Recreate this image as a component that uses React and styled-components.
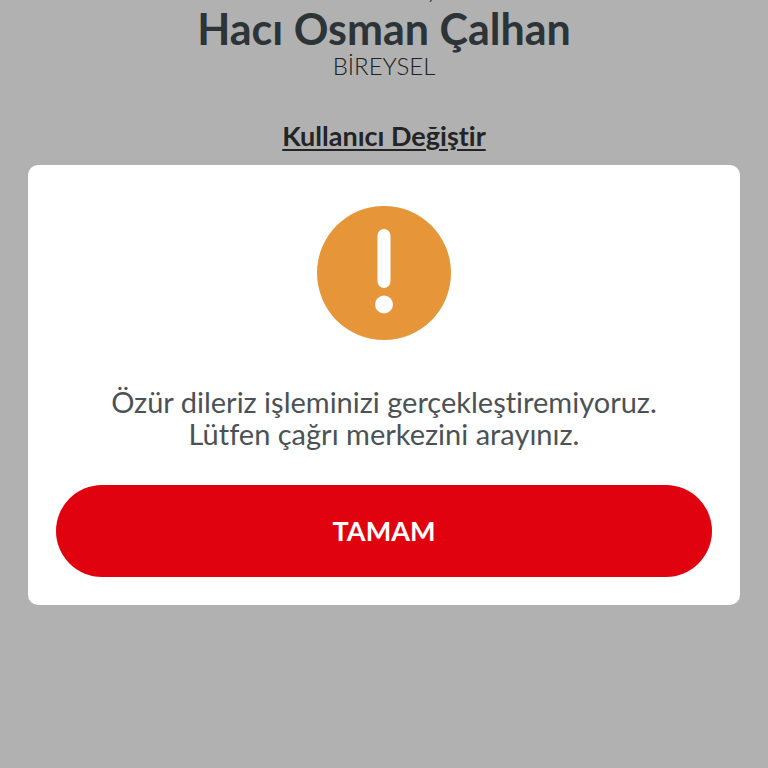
import React from "react"
import styled, { createGlobalStyle } from "styled-components"

const color = {
  name: "#424c50",
  muted: "#2c2f31",
  link: "#323537",
  message: "#4b5256",
  red: "#e10210",
  orange: "#e69638",
}

const GlobalStyle = createGlobalStyle`
  * {
    box-sizing: border-box;
  }

  body {
    margin: 0;
    background-color: #fff;
    font-family: Lato, "Open Sans", sans-serif;
    font-variant-ligatures: none;
  }
`

const Page = styled.main`
  min-height: 100vh;
  display: flex;
  flex-direction: column;
  align-items: center;
`

const Greeting = styled.div`
  height: 5px;
  display: flex;
  align-items: flex-end;
  overflow: hidden;

  color: ${color.name};
  font-size: 24px;
  line-height: 30px;
`

const UserName = styled.h1`
  margin: 0;
  color: ${color.name};
  font-size: 43px;
  font-weight: 700;
  line-height: 48px;
`

const UserType = styled.div`
  color: ${color.muted};
  font-size: 24px;
  font-weight: 300;
  line-height: 26px;
`

const ChangeUser = styled.a`
  margin-top: 41px;
  color: ${color.link};
  font-size: 27px;
  font-weight: 700;
  line-height: 32px;
  text-underline-offset: 3px;
  text-decoration-thickness: 2px;
`

const Backdrop = styled.div`
  position: fixed;
  inset: 0;
  padding: 30px 28px 28px;
  background-color: rgba(0, 0, 0, 0.305);

  display: flex;
  align-items: center;
`

const Dialog = styled.section`
  flex-grow: 1;
  padding: 41px 28px 28px;
  border-radius: 10px;
  background-color: #fff;

  display: flex;
  flex-direction: column;
  align-items: center;
`

const Message = styled.p`
  margin: 46px 0 35px;
  color: ${color.message};
  font-size: 29px;
  line-height: 32px;
  text-align: center;
`

const Button = styled.button`
  align-self: stretch;
  padding: 30px;
  border: 0;
  border-radius: 46px;
  background-color: ${color.red};
  color: #fff;
  font-family: inherit;
  font-size: 27px;
  font-weight: 700;
  line-height: 32px;
  cursor: pointer;
`

const WarningIcon = () => (
  <svg width="134" height="134" viewBox="0 0 134 134" aria-hidden="true">
    <circle cx="67" cy="67" r="67" fill={color.orange} />
    <rect x="60.5" y="23" width="13" height="59" rx="6.5" fill="#fff" />
    <circle cx="67" cy="98.5" r="9" fill="#fff" />
  </svg>
)

class App extends React.Component {
  state = { isWarningOpen: true }

  closeWarning = () => {
    this.setState({ isWarningOpen: false })
  }

  render() {
    return (
      <>
        <GlobalStyle />
        <Page lang="tr">
          <Greeting>Merhaba,</Greeting>
          <UserName>Hacı Osman Çalhan</UserName>
          <UserType>BİREYSEL</UserType>
          <ChangeUser href="#kullanici">Kullanıcı Değiştir</ChangeUser>
        </Page>
        {this.state.isWarningOpen && (
          <Backdrop>
            <Dialog role="alertdialog" aria-describedby="warning-message" lang="tr">
              <WarningIcon />
              <Message id="warning-message">
                Özür dileriz işleminizi gerçekleştiremiyoruz.
                <br />
                Lütfen çağrı merkezini arayınız.
              </Message>
              <Button type="button" onClick={this.closeWarning}>
                TAMAM
              </Button>
            </Dialog>
          </Backdrop>
        )}
      </>
    )
  }
}

export default App
